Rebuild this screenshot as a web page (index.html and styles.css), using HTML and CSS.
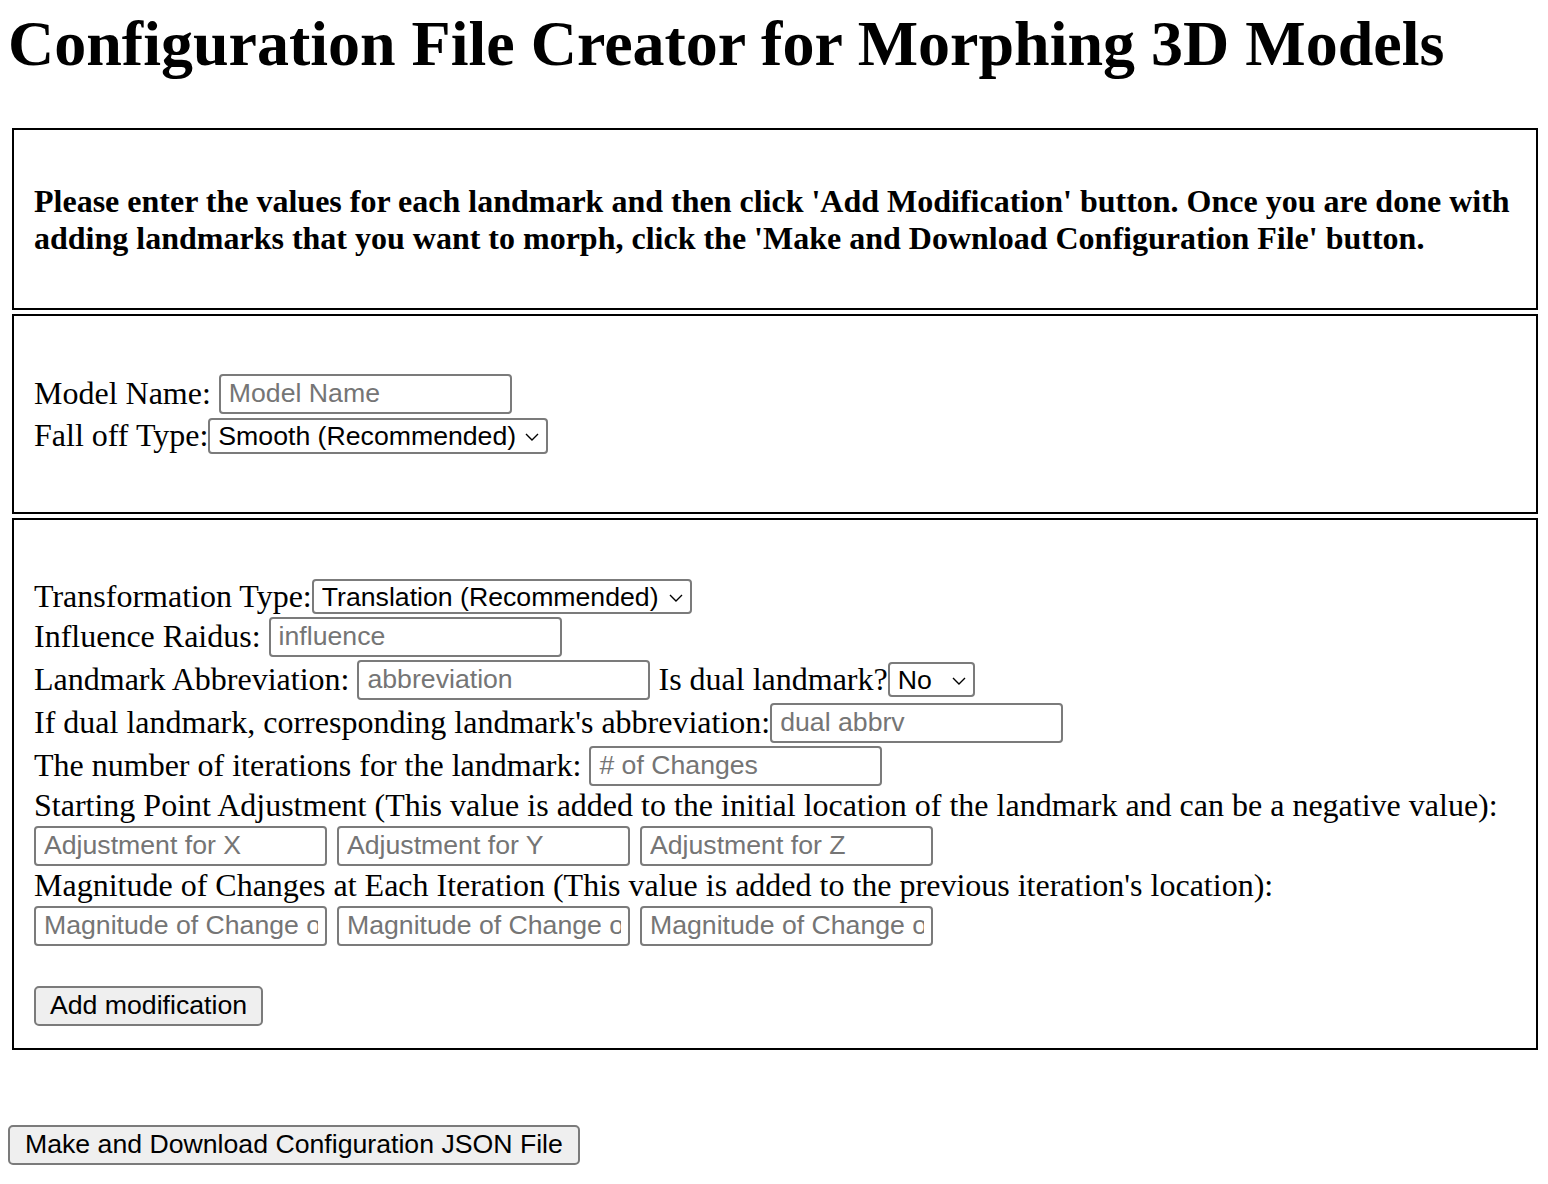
FILE: index.html
```html
<!DOCTYPE html>
<html lang="en">
<head>
<meta charset="utf-8">
<title>Configuration File Creator for Morphing 3D Models</title>
<link rel="stylesheet" href="styles.css">
</head>
<body>
<h1 class="title">Configuration File Creator for Morphing 3D Models</h1>

<div class="box box-intro">
  <p class="intro">Please enter the values for each landmark and then click 'Add Modification' button. Once you are done with adding landmarks that you want to morph, click the 'Make and Download Configuration File' button.</p>
</div>

<div class="box box-model">
  <div class="row">
    <span class="label sp">Model Name:</span>
    <input class="field" type="text" placeholder="Model Name">
  </div>
  <div class="row row-tight">
    <span class="label">Fall off Type:</span>
    <span class="sel-wrap">
      <select class="sel sel-smooth"><option>Smooth (Recommended)</option><option>Linear</option></select>
      <svg class="chev" width="14" height="8" viewBox="0 0 14 8"><polyline points="1,1 7,7 13,1" fill="none" stroke="#000" stroke-width="1.4"/></svg>
    </span>
  </div>
</div>

<div class="box box-mod">
  <div class="row">
    <span class="label">Transformation Type:</span>
    <span class="sel-wrap">
      <select class="sel sel-trans"><option>Translation (Recommended)</option><option>Scaling</option></select>
      <svg class="chev" width="14" height="8" viewBox="0 0 14 8"><polyline points="1,1 7,7 13,1" fill="none" stroke="#000" stroke-width="1.4"/></svg>
    </span>
  </div>
  <div class="row">
    <span class="label sp">Influence Raidus:</span>
    <input class="field" type="text" placeholder="influence">
  </div>
  <div class="row row-gap">
    <span class="label sp">Landmark Abbreviation:</span>
    <input class="field" type="text" placeholder="abbreviation">
    <span class="label pre">Is dual landmark?</span>
    <span class="sel-wrap">
      <select class="sel sel-no"><option>No</option><option>Yes</option></select>
      <svg class="chev" width="14" height="8" viewBox="0 0 14 8"><polyline points="1,1 7,7 13,1" fill="none" stroke="#000" stroke-width="1.4"/></svg>
    </span>
  </div>
  <div class="row row-gap">
    <span class="label">If dual landmark, corresponding landmark's abbreviation:</span>
    <input class="field" type="text" placeholder="dual abbrv">
  </div>
  <div class="row row-gap">
    <span class="label sp">The number of iterations for the landmark:</span>
    <input class="field" type="text" placeholder="# of Changes">
  </div>
  <div class="row">
    <span class="label nowrap">Starting Point Adjustment (This value is added to the initial location of the landmark and can be a negative value):</span>
  </div>
  <div class="row triple">
    <input class="field" type="text" placeholder="Adjustment for X">
    <input class="field" type="text" placeholder="Adjustment for Y">
    <input class="field" type="text" placeholder="Adjustment for Z">
  </div>
  <div class="row">
    <span class="label nowrap">Magnitude of Changes at Each Iteration (This value is added to the previous iteration's location):</span>
  </div>
  <div class="row triple">
    <input class="field" type="text" placeholder="Magnitude of Change on X">
    <input class="field" type="text" placeholder="Magnitude of Change on Y">
    <input class="field" type="text" placeholder="Magnitude of Change on Z">
  </div>
  <div class="actions">
    <button class="btn" type="button">Add modification</button>
  </div>
</div>

<div class="footer">
  <button class="btn btn-make" type="button">Make and Download Configuration JSON File</button>
</div>
</body>
</html>
```
FILE: styles.css
```css
html, body {
  background: #ffffff;
}

body {
  margin: 0;
  font-family: "Liberation Serif", "Times New Roman", serif;
  font-size: 32px;
  color: #000;
}

.title {
  margin: 7px 0 47px 8px;
  font-size: 64px;
  font-weight: bold;
  line-height: 74px;
  white-space: nowrap;
}

.box {
  box-sizing: border-box;
  width: 1526px;
  margin-left: 12px;
  border: 2px solid #000;
  padding-left: 20px;
  padding-right: 20px;
}

.box + .box {
  margin-top: 4px;
}

.box-intro {
  padding-top: 53px;
  padding-bottom: 51px;
}

.intro {
  margin: 0;
  font-weight: bold;
  line-height: 36.8px;
}

.box-model {
  padding-top: 58px;
  padding-bottom: 56px;
}

.box-mod {
  padding-top: 57px;
  padding-bottom: 22px;
}

.row {
  display: flex;
  align-items: center;
  height: 40px;
}

.row-tight {
  margin-top: 2px;
}

.row-gap {
  margin-top: 3px;
}

.label {
  line-height: 36.8px;
  white-space: nowrap;
}

.sp {
  margin-right: 8px;
}

.pre {
  margin-left: 8px;
}

.nowrap {
  white-space: nowrap;
}

.field {
  box-sizing: border-box;
  width: 293px;
  height: 40px;
  margin: 0;
  padding: 0 7px 0 8px;
  border: 2px solid #7b7b7b;
  border-radius: 4px;
  background: #fff;
  font-family: "Liberation Sans", Arial, sans-serif;
  font-size: 26.67px;
  color: #000;
  outline: none;
}

.field::placeholder {
  color: #757575;
  opacity: 1;
}

.triple {
  gap: 10px;
}

.sel-wrap {
  position: relative;
  display: inline-flex;
}

.sel {
  box-sizing: border-box;
  -webkit-appearance: none;
  appearance: none;
  height: 36px;
  margin: 0;
  padding: 0 30px 0 8px;
  border: 2px solid #7b7b7b;
  border-radius: 4px;
  background: #fff;
  font-family: "Liberation Sans", Arial, sans-serif;
  font-size: 26.67px;
  color: #000;
  outline: none;
}

.sel-smooth {
  width: 340px;
}

.sel-trans {
  width: 380px;
  height: 35px;
}

.sel-no {
  width: 87px;
  height: 35px;
}

.chev {
  position: absolute;
  right: 9px;
  top: 50%;
  margin-top: -3px;
  pointer-events: none;
}

.actions {
  margin-top: 40px;
  display: flex;
}

.btn {
  box-sizing: border-box;
  height: 40px;
  margin: 0;
  padding: 0 14px;
  border: 2px solid #7b7b7b;
  border-radius: 5px;
  background: #efefef;
  font-family: "Liberation Sans", Arial, sans-serif;
  font-size: 26.67px;
  color: #000;
}

.footer {
  margin: 75px 0 0 8px;
  display: flex;
}

.btn-make {
  padding: 0 15px;
}
```
